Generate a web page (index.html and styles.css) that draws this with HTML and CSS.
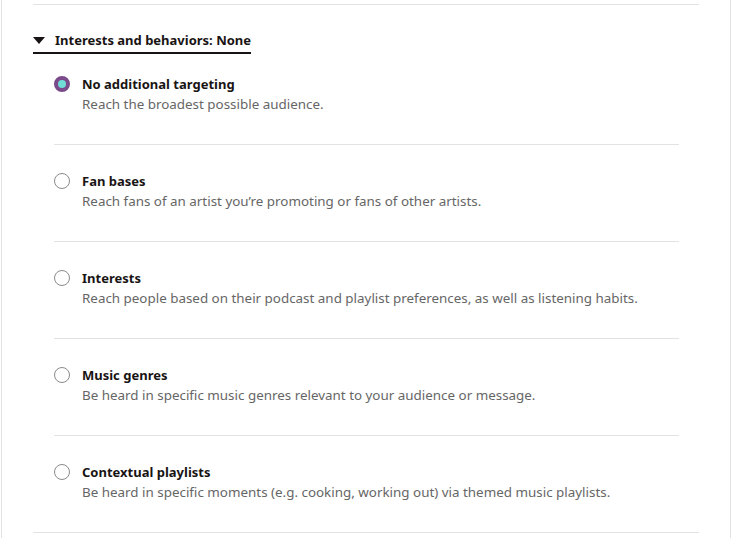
FILE: index.html
```html
<!DOCTYPE html>
<html lang="en">
<head>
  <meta charset="UTF-8" />
  <meta name="viewport" content="width=device-width, initial-scale=1.0"/>
  <title>Audience targeting</title>
  <link rel="stylesheet" href="styles.css">
</head>
<body>

<div class="panel">
  <div class="section">
    <div class="toggle">
      <span class="caret"></span>
      <span class="toggle-label">Interests and behaviors: None</span>
    </div>

    <ul class="options">
      <li class="option">
        <span class="radio checked"></span>
        <div class="option-text">
          <div class="option-title">No additional targeting</div>
          <div class="option-desc">Reach the broadest possible audience.</div>
        </div>
      </li>
      <li class="option">
        <span class="radio"></span>
        <div class="option-text">
          <div class="option-title">Fan bases</div>
          <div class="option-desc">Reach fans of an artist you’re promoting or fans of other artists.</div>
        </div>
      </li>
      <li class="option">
        <span class="radio"></span>
        <div class="option-text">
          <div class="option-title">Interests</div>
          <div class="option-desc">Reach people based on their podcast and playlist preferences, as well as listening habits.</div>
        </div>
      </li>
      <li class="option">
        <span class="radio"></span>
        <div class="option-text">
          <div class="option-title">Music genres</div>
          <div class="option-desc">Be heard in specific music genres relevant to your audience or message.</div>
        </div>
      </li>
      <li class="option">
        <span class="radio"></span>
        <div class="option-text">
          <div class="option-title">Contextual playlists</div>
          <div class="option-desc">Be heard in specific moments (e.g. cooking, working out) via themed music playlists.</div>
        </div>
      </li>
    </ul>
  </div>
</div>

</body>
</html>
```

FILE: styles.css
```css
:root {
  --text-color: #191414;
  --text-color-light: #666;
  --line-color: #e2e2e2;
  --radio-border: #8a8a8a;
  --purple: #7a4a8a;
  --teal: #6fdcd6;
}

body {
  margin: 0;
  padding: 0;
  background: #fff;
  color: var(--text-color);
  font-family: "Noto Sans", Arial, sans-serif;
}

.panel {
  margin-left: 1px;
  width: 730px;
  height: 538px;
  border-left: 1px solid var(--line-color);
  border-right: 1px solid var(--line-color);
  padding: 0 31px;
  box-sizing: border-box;
  overflow: hidden;
}

.section {
  margin-top: 4px;
  border-top: 1px solid var(--line-color);
  border-bottom: 1px solid var(--line-color);
}

.toggle {
  display: inline-flex;
  align-items: center;
  gap: 10px;
  margin-top: 25px;
  padding-bottom: 2px;
  border-bottom: 2px solid var(--text-color);
  line-height: 20px;
}

.caret {
  width: 0;
  height: 0;
  border-left: 6px solid transparent;
  border-right: 6px solid transparent;
  border-top: 7px solid var(--text-color);
}

.toggle-label {
  font-size: 13px;
  font-weight: 700;
}

.options {
  list-style: none;
  margin: 0;
  padding: 0 20px 0 21px;
}

.option {
  display: flex;
  align-items: flex-start;
  gap: 12px;
  padding: 26px 0 30px;
  border-bottom: 1px solid var(--line-color);
}

.option:first-child {
  padding-top: 20px;
}

.option:last-child {
  border-bottom: none;
}

.radio {
  flex: none;
  width: 16px;
  height: 16px;
  margin-top: 2px;
  border-radius: 50%;
  border: 1.5px solid var(--radio-border);
  box-sizing: border-box;
}

.radio.checked {
  border: 4px solid var(--purple);
  background: var(--teal);
}

.option-title {
  font-size: 13px;
  font-weight: 700;
  line-height: 20px;
}

.option-desc {
  font-size: 13.4px;
  line-height: 20px;
  color: var(--text-color-light);
}
```
